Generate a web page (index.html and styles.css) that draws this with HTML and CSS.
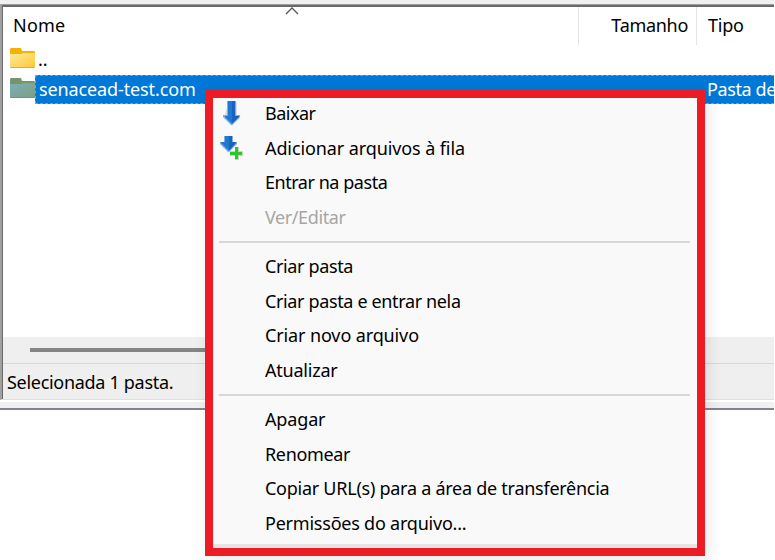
FILE: index.html
```
<!DOCTYPE html>
<html lang="pt-BR">
<head>
<meta charset="utf-8">
<title>Arquivos remotos</title>
<link rel="stylesheet" href="styles.css">
</head>
<body>
<main class="window">
  <section class="panel">
    <header class="columns">
      <span class="col-name"><span class="nome">Nome</span></span>
      <span class="col-size"><span class="tamanho">Tamanho</span></span>
      <span class="col-type"><span class="tipo">Tipo</span></span>
      <svg class="sort" width="14" height="8" viewBox="0 0 14 8"><path d="M1 7 7 1l6 6" fill="none" stroke="#555" stroke-width="1.3"/></svg>
    </header>
    <div class="files">
      <div class="file">
        <svg class="folder" width="25" height="20" viewBox="0 0 25 20"><defs><linearGradient id="y" x2="1" y2="1"><stop stop-color="#ffe9a0"/><stop offset="1" stop-color="#ffca35"/></linearGradient></defs><path d="M0 1 1 0h10l1 3h12l1 1v15l-1 1H1l-1-1z" fill="#f5b200"/><path d="M0 6h11l2-1h12v14H0z" fill="url(#y)"/><path d="M0 19h25l-1 1H1z" fill="#e2ac31"/></svg>
        <span class="dots">..</span>
      </div>
      <div class="file selected">
        <svg class="folder" width="25" height="20" viewBox="0 0 25 20"><defs><linearGradient id="b" x2="1" y2="1"><stop stop-color="#7cafba"/><stop offset="1" stop-color="#7c9f83"/></linearGradient></defs><path d="M0 1 1 0h10l1 3h12l1 1v15l-1 1H1l-1-1z" fill="#799469"/><path d="M0 6h11l2-1h12v14H0z" fill="url(#b)"/><path d="M0 19h25l-1 1H1z" fill="#6d9187"/></svg>
        <div class="highlight"><span class="filename">senacead-test.com</span><span class="filetype">Pasta de</span></div>
      </div>
    </div>
    <div class="scrollbar"><div class="thumb"></div></div>
    <footer class="status"><span class="status-text">Selecionada 1 pasta.</span></footer>
  </section>
  <div class="window-edge"></div>
</main>
<nav class="menu">
  <div class="item"><svg class="icon" width="26" height="26" viewBox="0 0 26 26"><path d="M11 2h8v15h4l-9 9-8-9z" fill="#ddd"/><path d="M9 1h9v14h4v2l-8 8h-1l-8-8v-2h4z" fill="#81ade0"/><path d="M10 1h4v23l-7-7v-1h3z" fill="#1c7ad5"/><path d="M14 1h3v15h4v1l-7 7z" fill="#1963bd"/></svg><span class="l1">Baixar</span></div>
  <div class="item"><svg class="icon" width="26" height="26" viewBox="0 0 26 26"><path d="M6 1h9v6h4v2l-8 8h-1L2 9V7h4z" fill="#81ade0"/><path d="M7 1h4v15L3 8V7h4z" fill="#1c7ad5"/><path d="M11 1h3v6h4v1l-7 8z" fill="#1963bd"/><path d="M17 12h4v4h4v5h-4v4h-4v-4h-5v-5h5z" fill="#c9d4c9"/><path d="M17 12h3v5h4v3h-4v4h-3v-4h-5v-3h5z" fill="#2fc52c"/></svg><span class="l2">Adicionar arquivos à fila</span></div>
  <div class="item"><span class="l3">Entrar na pasta</span></div>
  <div class="item disabled"><span class="l4">Ver/Editar</span></div>
  <div class="separator"></div>
  <div class="item"><span class="l5">Criar pasta</span></div>
  <div class="item"><span class="l6">Criar pasta e entrar nela</span></div>
  <div class="item"><span class="l7">Criar novo arquivo</span></div>
  <div class="item"><span class="l8">Atualizar</span></div>
  <div class="separator"></div>
  <div class="item"><span class="l9">Apagar</span></div>
  <div class="item"><span class="l10">Renomear</span></div>
  <div class="item"><span class="l11">Copiar URL(s) para a área de transferência</span></div>
  <div class="item"><span class="l12">Permissões do arquivo...</span></div>
</nav>
</body>
</html>
```
FILE: styles.css
```
* { box-sizing: border-box; }
body { margin: 0; width: 775px; height: 560px; overflow: hidden; position: relative; background: #fff; color: #000; font: 18px/24px "Noto Sans", "Open Sans", sans-serif; white-space: nowrap; }
.window { width: 774px; height: 410px; padding-top: 4px; background: #f0f0f0; overflow: hidden; }
.panel { height: 396px; border-top: 1px solid #a0a0a0; border-left: 2px solid #a0a0a0; border-bottom: 1px solid #dfdfdf; box-shadow: inset 1px 0 #696969, inset 0 2px #696969; padding: 2px 0 0 1px; display: flex; flex-direction: column; }
.columns { height: 38px; background: #fff; display: flex; align-items: center; position: relative; flex: none; }
.col-name { width: 576px; height: 38px; padding: 6px 0 0 10px; border-right: 1px solid #e5e5e5; }
.col-size { width: 118px; height: 38px; padding: 6px 8px 0 0; text-align: right; border-right: 1px solid #e5e5e5; }
.col-type { padding-left: 11px; height: 38px; padding-top: 6px; }
.sort { position: absolute; left: 282px; top: 0; }
.files { background: #fff; height: 292px; }
.file { height: 30px; padding-left: 7px; display: flex; align-items: flex-start; }
.folder { margin-top: 3px; flex: none; }
.dots { padding: 2px 0 0 3px; }
.highlight { flex: 1; height: 29px; background: #0078d7; border: 1px dashed #d98a4a; border-right: 0; color: #fff; display: flex; overflow: hidden; padding: 1px 0 0 3px; }
.filename { width: 668px; flex: none; letter-spacing: -.12px; }
.filetype { letter-spacing: -.4px; }
.scrollbar { height: 26px; padding: 11px 0 0 27px; background: #efefef; }
.thumb { height: 4px; width: 620px; background: #858585; }
.status { height: 36px; border-top: 1px solid #d7d7d7; background: #efefef; padding: 6px 0 0 4px; }
.status-text { letter-spacing: -.3px; }
.window-edge { height: 10px; border-top: 2px solid #fff; border-bottom: 2px solid #828290; background: #f0f0f0; }
.menu { position: absolute; left: 205px; top: 90px; width: 500px; height: 466px; border: 8px solid #ed1c24; background: #f9f9f9; box-shadow: inset 0 -4px #e5e5e5, 3px 3px 14px rgba(0,0,0,.1); }
.item { height: 34.67px; padding: 3px 0 0 52px; position: relative; }
.icon { position: absolute; left: 5px; top: 2px; }
.disabled { color: #a6a6a6; }
.separator { height: 2px; margin: 4.3px 7px 8px 6px; background: #d7d7d7; }
.nome { letter-spacing: .2px; }
.tamanho { letter-spacing: -.3px; }
.tipo { letter-spacing: -.2px; }
.l1 { letter-spacing: -.5px; }
.l2 { letter-spacing: -.1px; }
.l3 { letter-spacing: -.46px; }
.l4 { letter-spacing: -.4px; }
.l5, .l6 { letter-spacing: -.36px; }
.l7 { letter-spacing: -.12px; }
.l8 { letter-spacing: -.22px; }
.l9 { letter-spacing: -.15px; }
.l10 { letter-spacing: -.35px; }
.l11 { letter-spacing: -.26px; }
.l12 { letter-spacing: -.22px; }
```
